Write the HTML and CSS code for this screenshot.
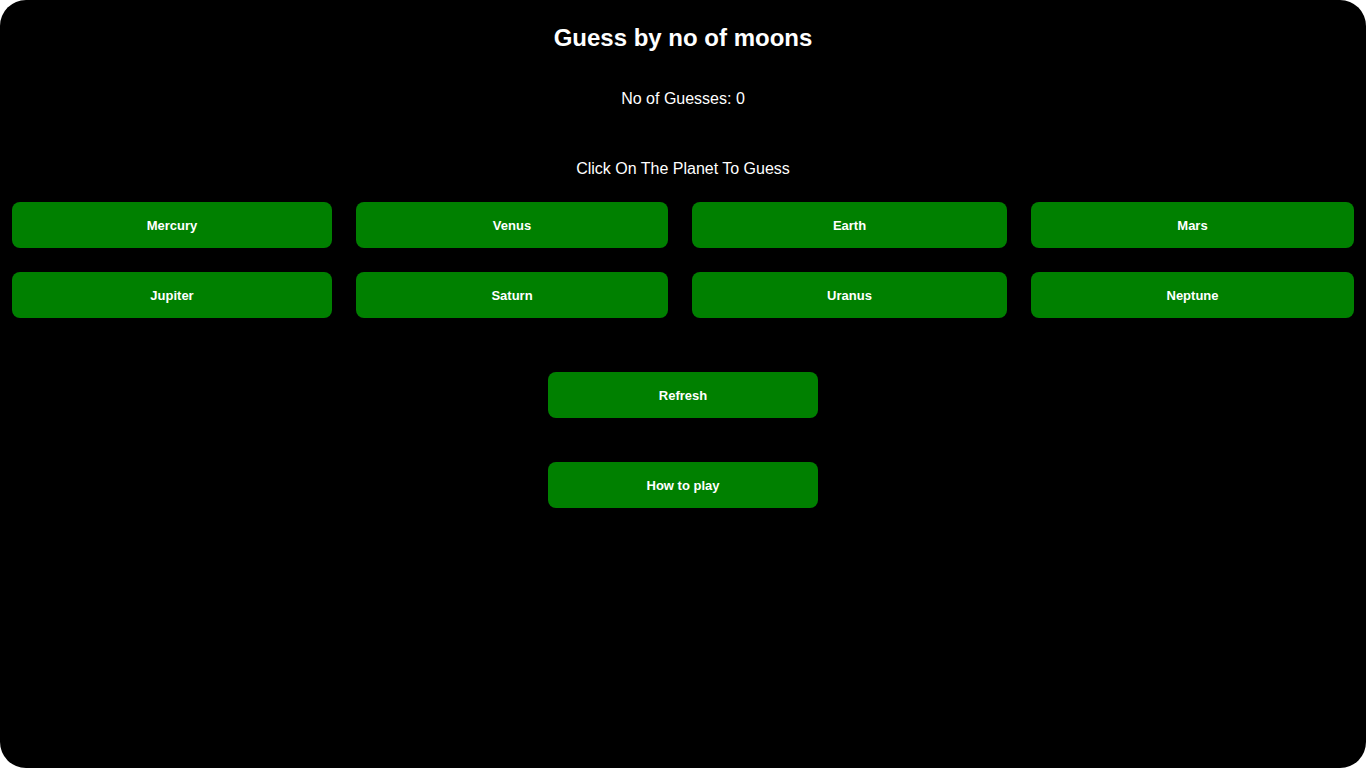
FILE: index.html
```html
<!DOCTYPE html>
<html>
<head>
<meta charset="utf-8">
<link rel="stylesheet" href="styles.css">
</head>
<body>
<main class="app">
  <h1 class="title">Guess by no of moons</h1>
  <p class="guesses">No of Guesses: 0</p>
  <p class="hint">Click On The Planet To Guess</p>
  <div class="planets">
    <button class="btn">Mercury</button>
    <button class="btn">Venus</button>
    <button class="btn">Earth</button>
    <button class="btn">Mars</button>
    <button class="btn">Jupiter</button>
    <button class="btn">Saturn</button>
    <button class="btn">Uranus</button>
    <button class="btn">Neptune</button>
  </div>
  <div class="actions">
    <button class="btn wide">Refresh</button>
    <button class="btn wide">How to play</button>
  </div>
</main>
</body>
</html>
```
FILE: styles.css
```css
html, body {
  margin: 0;
  padding: 0;
  background: #ffffff;
  height: 100%;
}
.app {
  box-sizing: border-box;
  height: 768px;
  background: #000;
  border-radius: 26px;
  color: #fff;
  font-family: "Liberation Sans", Arial, sans-serif;
  display: flex;
  flex-direction: column;
  align-items: center;
  padding-top: 24px;
  overflow: hidden;
}
.title {
  margin: 0;
  font-size: 24px;
  line-height: 28px;
  font-weight: bold;
}
.guesses {
  margin: 38px 0 0;
  font-size: 16px;
  line-height: 18px;
}
.hint {
  margin: 52px 0 0;
  font-size: 16px;
  line-height: 18px;
}
.planets {
  margin-top: 24px;
  align-self: stretch;
  padding: 0 12px;
  display: grid;
  grid-template-columns: 320px 312px 315px 323px;
  gap: 24px;
}
.btn {
  height: 46px;
  border: none;
  border-radius: 8px;
  background: #008000;
  color: #fff;
  font-family: "Liberation Sans", Arial, sans-serif;
  font-size: 13px;
  font-weight: bold;
  padding: 0;
}
.actions {
  margin-top: 54px;
  display: flex;
  flex-direction: column;
  gap: 44px;
}
.wide {
  width: 270px;
}
```
